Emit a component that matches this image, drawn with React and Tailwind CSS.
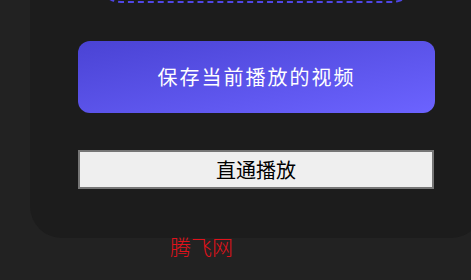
export default function App() {
  return (
    <div
      className="w-[471px] h-[280px] overflow-hidden bg-[#222222]"
      style={{ fontFamily: '"Noto Sans CJK SC", "Noto Sans", sans-serif' }}
    >
      <div className="ml-[30px] w-[453px] -mt-[100px] bg-[#1c1c1c] rounded-b-[32px] px-[48px] pb-[49px]">
        <div className="mx-[19px] h-[103px] border-2 border-dashed border-[#4f46e5] rounded-[24px]" />
        <button className="mt-[38px] w-full h-[72px] rounded-[12px] bg-gradient-to-br from-[#4a43d4] to-[#6c63ff] text-white text-[20px] tracking-[2px] flex items-center justify-center">
          保存当前播放的视频
        </button>
        <button className="mt-[37px] w-[356px] h-[39px] bg-[#efefef] border-2 border-[#767676] text-black text-[20px] flex items-center justify-center">
          直通播放
        </button>
      </div>
      <div className="ml-[170px] mt-[-2px] text-[21px] leading-none text-[#e0121b] font-light">
        腾飞网
      </div>
    </div>
  );
}
